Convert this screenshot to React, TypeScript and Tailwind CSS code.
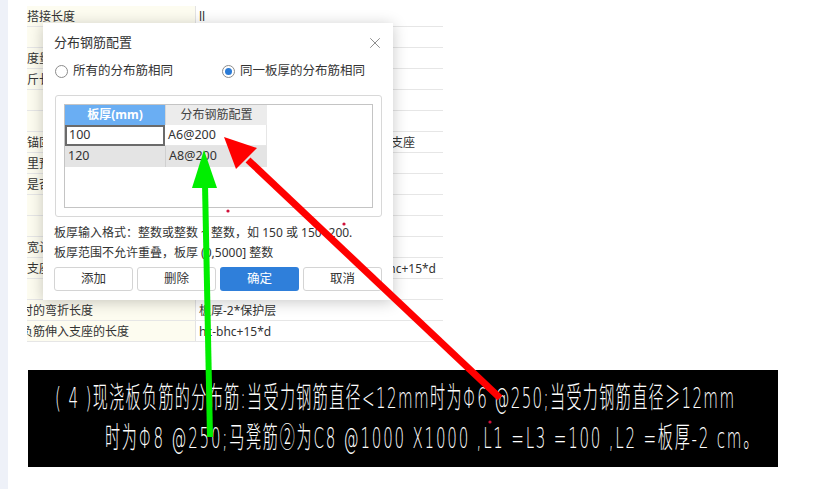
import { X } from 'lucide-react';

type Row = { label: string; value: string; right?: string };

const ROWS: Row[] = [
  { label: '搭接长度', value: 'll' },
  { label: '', value: '' },
  { label: '度量单位', value: '' },
  { label: '斤长计算方式', value: '' },
  { label: '', value: '' },
  { label: '', value: '' },
  { label: '锚固', value: '伸入支座', right: 'pr-[28px]' },
  { label: '里预留长度', value: '' },
  { label: '是否计算', value: '' },
  { label: '', value: '' },
  { label: '', value: '' },
  { label: '宽计算方式', value: '' },
  { label: '支座负筋长度', value: 'hc-bhc+15*d', right: 'pr-[7px]' },
  { label: '', value: '' },
  { label: '时的弯折长度', value: '板厚-2*保护层' },
  { label: '负筋伸入支座的长度', value: 'hc-bhc+15*d' },
];

const BUTTONS = ['添加', '删除', '确定', '取消'] as const;

function BackgroundTable() {
  return (
    <div className="ml-[27px] mt-[6px] w-[416px] text-[12px] text-[#333]">
      {ROWS.map((r, i) => (
        <div key={i} className="flex h-[21px] border-b border-[#e6e6e6]">
          <div className="flex w-[168px] shrink-0 items-center overflow-hidden whitespace-nowrap bg-[#fdfcf0] pt-[1px]">
            <span className={i >= 14 ? '-ml-[6px]' : ''}>{r.label}</span>
          </div>
          <div
            className={
              r.right
                ? `flex flex-1 items-center justify-end overflow-hidden whitespace-nowrap border-l border-[#e3e3e3] pt-[1px] ${r.right}`
                : 'flex flex-1 items-center overflow-hidden whitespace-nowrap border-l border-[#e3e3e3] pl-[3px] pt-[1px]'
            }
          >
            {r.value}
          </div>
        </div>
      ))}
    </div>
  );
}

function Radio({ checked, label }: { checked?: boolean; label: string }) {
  return (
    <label className="flex items-center gap-[5px]">
      <span className="flex h-[13px] w-[13px] items-center justify-center rounded-full border border-[#8c8c8c] bg-white">
        {checked && <span className="h-[7px] w-[7px] rounded-full bg-[#2b7bd6]" />}
      </span>
      <span>{label}</span>
    </label>
  );
}

function Dialog() {
  return (
    <div className="absolute left-[43px] top-[23px] flex h-[277px] w-[350px] flex-col bg-white px-[11px] text-[12px] text-[#333] shadow-[0_2px_14px_rgba(0,0,0,0.22)]">
      <div className="flex h-[38px] items-center justify-between pt-[1px]">
        <span className="text-[13px]">分布钢筋配置</span>
        <X className="-mr-[2px] h-[18px] w-[18px] text-[#777]" strokeWidth={1.1} />
      </div>
      <div className="flex h-[20px] items-center text-[12.5px]">
        <div className="w-[168px] pl-[1px]">
          <Radio label="所有的分布筋相同" />
        </div>
        <Radio checked label="同一板厚的分布筋相同" />
      </div>

      <div className="mt-[14px] ml-[1px] w-[327px] rounded-[3px] border border-[#d8d8d8] p-[8px]">
        <div className="h-[104px] border border-[#c4c4c4] bg-white">
          <div className="flex h-[20px]">
            <div className="flex w-[100px] items-center justify-center bg-[#6aaef3] font-bold text-white">
              板厚(mm)
            </div>
            <div className="flex w-[102px] items-center justify-center border-l border-[#d6d6d6] bg-[#ececec] text-[#444]">
              分布钢筋配置
            </div>
          </div>
          <div className="flex h-[21px] text-[12.5px]">
            <div className="flex w-[100px] items-center border-2 border-[#6b6b6b] pl-[2px]">100</div>
            <div className="flex w-[102px] items-center border-b border-r border-[#e6e6e6] pl-[3px]">A6@200</div>
          </div>
          <div className="flex h-[21px] text-[12.5px]">
            <div className="flex w-[100px] items-center bg-[#e4e4e4] pl-[3px]">120</div>
            <div className="flex w-[102px] items-center border-l border-[#d0d0d0] bg-[#e4e4e4] pl-[3px]">A8@200</div>
          </div>
        </div>
      </div>

      <div className="mt-[6px] leading-[20px]">
        <div>板厚输入格式：整数或整数 ~ 整数，如 150 或 150~200.</div>
        <div>板厚范围不允许重叠，板厚 (0,5000] 整数</div>
      </div>

      <div className="mt-[4px] flex gap-[4px] text-[12.5px]">
        {BUTTONS.map((b) => (
          <button
            key={b}
            className={
              b === '确定'
                ? 'h-[24px] w-[79px] rounded-[3px] bg-[#2f7fda] text-white'
                : 'h-[24px] w-[79px] rounded-[3px] border border-[#d4d4d4] bg-white text-[#333]'
            }
          >
            {b}
          </button>
        ))}
      </div>
    </div>
  );
}

function Banner() {
  return (
    <div className="ml-[28px] mt-[28px] h-[97px] w-[750px] overflow-hidden bg-black font-['DejaVu_Sans','Noto_Sans_CJK_SC',sans-serif] text-[29px] font-extralight leading-[40px] text-white">
      <div className="ml-[27px] mt-[8px] origin-left scale-x-[0.52] whitespace-nowrap tracking-[2.6px]">
        ( 4 )现浇板负筋的分布筋:当受力钢筋直径&lt;12mm时为Φ6 @250;当受力钢筋直径≥12mm
      </div>
      <div className="ml-[77px] origin-left scale-x-[0.52] whitespace-nowrap tracking-[3.4px]">
        时为Φ8 @250;马凳筋②为C8 @1000 X1000 ,L1 =L3 =100 ,L2 =板厚-2 cm。
      </div>
    </div>
  );
}

function Arrows() {
  return (
    <svg className="pointer-events-none absolute left-0 top-0" width="813" height="489" viewBox="0 0 813 489">
      <line x1="500" y1="398" x2="248" y2="160" stroke="#ff0000" strokeWidth="7" />
      <polygon points="224,137 236,169 257,148" fill="#ff0000" />
      <line x1="210" y1="437" x2="205" y2="184" stroke="#00ee00" strokeWidth="6" />
      <polygon points="204,150 192,188 217,188" fill="#00ee00" />
      <circle cx="228" cy="211" r="1.6" fill="#d0103a" />
      <circle cx="344" cy="224" r="1.6" fill="#d0103a" />
      <circle cx="490" cy="422" r="1.6" fill="#d0103a" />
    </svg>
  );
}

export default function App() {
  return (
    <div className="relative flex h-[489px] w-[813px] overflow-hidden bg-white font-['Noto_Sans','Noto_Sans_CJK_SC',sans-serif]">
      <div className="w-[8px] shrink-0 bg-[#eef1f8]" />
      <div className="-ml-[8px] flex flex-col">
        <BackgroundTable />
        <Banner />
      </div>
      <Dialog />
      <Arrows />
    </div>
  );
}
